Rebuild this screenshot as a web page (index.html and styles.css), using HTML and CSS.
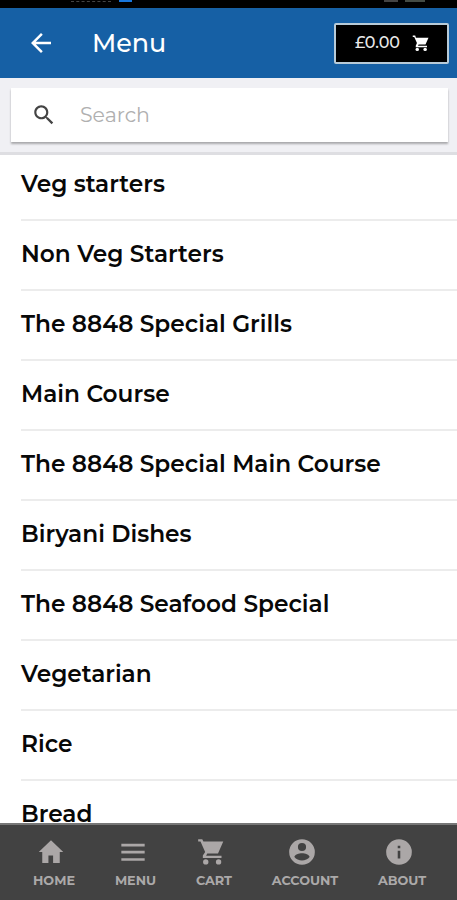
FILE: index.html
```html
<!DOCTYPE html>
<html lang="en">
  <head>
    <meta charset="UTF-8" />
    <meta name="viewport" content="width=device-width, initial-scale=1.0" />
    <title>Menu</title>
    <link rel="stylesheet" href="styles.css">
  </head>

  <body>
    <div class="app">
      <div class="status-bar">
        <span class="status-text"></span>
        <span class="status-badge"></span>
        <span class="status-signal"></span>
        <span class="status-battery"></span>
      </div>

      <header class="header">
        <svg class="back-icon" viewBox="0 0 24 24"><path d="M20 11H7.83l5.59-5.59L12 4l-8 8 8 8 1.41-1.41L7.83 13H20v-2z" /></svg>
        <h1>Menu</h1>
        <button class="cart-button">
          <span class="cart-total">£0.00</span>
          <svg class="cart-icon" viewBox="0 0 24 24"><path d="M1 2v2h2l3.600 8L5 15.500v2h15v-2H8l.8-1.500H18l4-9H5.200l-.9-3H1z" /><circle cx="7" cy="20.500" r="2.300" /><circle cx="17.500" cy="20.500" r="2.300" /></svg>
        </button>
      </header>

      <div class="search-bar">
        <div class="search-box">
          <svg class="search-icon" viewBox="0 0 24 24"><path d="M15.5 14h-.79l-.28-.27C15.41 12.59 16 11.11 16 9.5 16 5.91 13.09 3 9.5 3S3 5.91 3 9.5 5.91 16 9.5 16c1.61 0 3.09-.59 4.23-1.57l.27.28v.79l5 4.99L20.49 19l-4.99-5zm-6 0C7.01 14 5 11.99 5 9.5S7.01 5 9.5 5 14 7.01 14 9.5 11.99 14 9.5 14z" /></svg>
          <input type="text" class="search-input" placeholder="Search" />
        </div>
      </div>

      <ul class="menu-list">
        <li><span>Veg starters</span></li>
        <li><span>Non Veg Starters</span></li>
        <li><span>The 8848 Special Grills</span></li>
        <li><span>Main Course</span></li>
        <li><span>The 8848 Special Main Course</span></li>
        <li><span>Biryani Dishes</span></li>
        <li><span>The 8848 Seafood Special</span></li>
        <li><span>Vegetarian</span></li>
        <li><span>Rice</span></li>
        <li><span>Bread</span></li>
      </ul>

      <nav class="tabs">
        <a class="tab">
          <svg viewBox="0 0 24 24"><path d="M9.800 21.500V15h4v6.500h5.700v-9.500H22.500L12 2 1.500 12h3v9.500z" /></svg>
          <span>HOME</span>
        </a>
        <a class="tab">
          <svg viewBox="0 0 24 24"><path d="M2 19.500h20v-2.200H2v2.200zm0-6.200h20v-2.300H2v2.300zM2 5v2.200h20V5H2z" /></svg>
          <span>MENU</span>
        </a>
        <a class="tab">
          <svg viewBox="0 0 24 24"><path d="M1 1v2h2l4 9-2 3v2.200h16v-2H7.800l1-1.900H18L22.500 3H5.500l-1-2H1z" /><circle cx="7.500" cy="20.500" r="2.300" /><circle cx="18.500" cy="20.500" r="2.300" /></svg>
          <span>CART</span>
        </a>
        <a class="tab">
          <svg viewBox="0 0 24 24"><path fill-rule="evenodd" d="M12 1a11 11 0 1 0 0 22 11 11 0 0 0 0-22zm0 3.200a3.500 3.500 0 1 1 0 7 3.500 3.500 0 0 1 0-7zM5.500 16.200c0-2 4-3.200 6.500-3.200s6.500 1.200 6.500 3.200c-1.300 2-4 3-6.500 3s-5.200-1-6.500-3z" /></svg>
          <span>ACCOUNT</span>
        </a>
        <a class="tab">
          <svg viewBox="0 0 24 24"><path fill-rule="evenodd" d="M12 1a11 11 0 1 0 0 22 11 11 0 0 0 0-22zm1.100 16.500h-2.200V11h2.200v6.500zm0-8.700h-2.200V6.600h2.200v2.200z" /></svg>
          <span>ABOUT</span>
        </a>
      </nav>
    </div>
  </body>
</html>
```
FILE: styles.css
```css
* {
  box-sizing: border-box;
}

body {
  margin: 0;
  font-family: Montserrat, Inter, sans-serif;
  background-color: #fff;
}

.app {
  display: flex;
  flex-direction: column;
  height: 100vh;
  overflow: hidden;
}

/* Status bar */
.status-bar {
  display: flex;
  flex: none;
  height: 8px;
  background-color: #000;
}

.status-text {
  width: 40px;
  height: 2px;
  margin-left: 71px;
  border-bottom: 1px dashed #444;
}

.status-badge {
  width: 13px;
  height: 2px;
  margin-left: 8px;
  background-color: #1877dc;
}

.status-signal {
  width: 14px;
  height: 2px;
  margin-left: 252px;
  background-color: #444;
}

.status-battery {
  width: 20px;
  height: 2px;
  margin-left: 7px;
  background-color: #444b44;
}

/* Header */
.header {
  display: flex;
  flex: none;
  align-items: center;
  height: 70px;
  padding: 0 8px 0 26px;
  background-color: #1660a5;
  color: #fff;
}

.back-icon {
  width: 30px;
  height: 30px;
  fill: #fff;
}

h1 {
  margin: 0 0 2px 36px;
  font-size: 25.4px;
  font-weight: 500;
}

.cart-button {
  display: flex;
  align-items: center;
  width: 115px;
  height: 41px;
  margin-left: auto;
  padding: 0 0 1px 19px;
  border: 2px solid #b8cbd8;
  border-radius: 2px;
  background-color: #000;
  color: #e8e8e8;
  font-family: inherit;
}

.cart-total {
  width: 45px;
  font-size: 16px;
  font-weight: 500;
}

.cart-icon {
  width: 18px;
  height: 18px;
  margin: 1px 0 0 12px;
  fill: #fff;
}

/* Search */
.search-bar {
  flex: none;
  height: 77px;
  padding: 10px 9px 0 11px;
  border-bottom: 3px solid #dedee2;
  background-color: #f0f0f4;
}

.search-box {
  display: flex;
  align-items: center;
  height: 54px;
  padding-left: 20px;
  background-color: #fff;
  box-shadow: 0 2px 2px rgba(0, 0, 0, 0.3);
}

.search-icon {
  width: 26px;
  height: 26px;
  fill: #444;
}

.search-input {
  width: 300px;
  margin: 0 0 2px 23px;
  padding: 0;
  border: none;
  outline: none;
  font-family: inherit;
  font-size: 20.5px;
}

.search-input::placeholder {
  color: #b0b0b0;
}

/* Categories */
.menu-list {
  flex: 1;
  min-height: 0;
  margin: 0;
  padding: 0 0 0 21px;
  overflow: hidden;
  list-style: none;
}

.menu-list li {
  display: flex;
  align-items: center;
  height: 70px;
  padding-bottom: 3px;
  border-bottom: 2px solid #ececec;
  color: #080808;
  font-size: 23.25px;
  font-weight: 600;
}

.menu-list li:first-child {
  height: 66px;
  padding-bottom: 7px;
}

/* Bottom tabs */
.tabs {
  display: grid;
  flex: none;
  grid-template-columns: 42px 41px 36px 66px 48px;
  column-gap: 40px;
  height: 77px;
  padding: 15px 0 0 33px;
  border-top: 2px solid #777;
  background-color: #424242;
}

.tab {
  display: flex;
  flex-direction: column;
  align-items: center;
  color: #aba9a9;
  font-size: 12.8px;
  font-weight: 700;
  line-height: 16px;
  white-space: nowrap;
}

.tab svg {
  width: 28px;
  height: 28px;
  margin: -2px 6px 7px 0;
  fill: #aba7a7;
}
```
